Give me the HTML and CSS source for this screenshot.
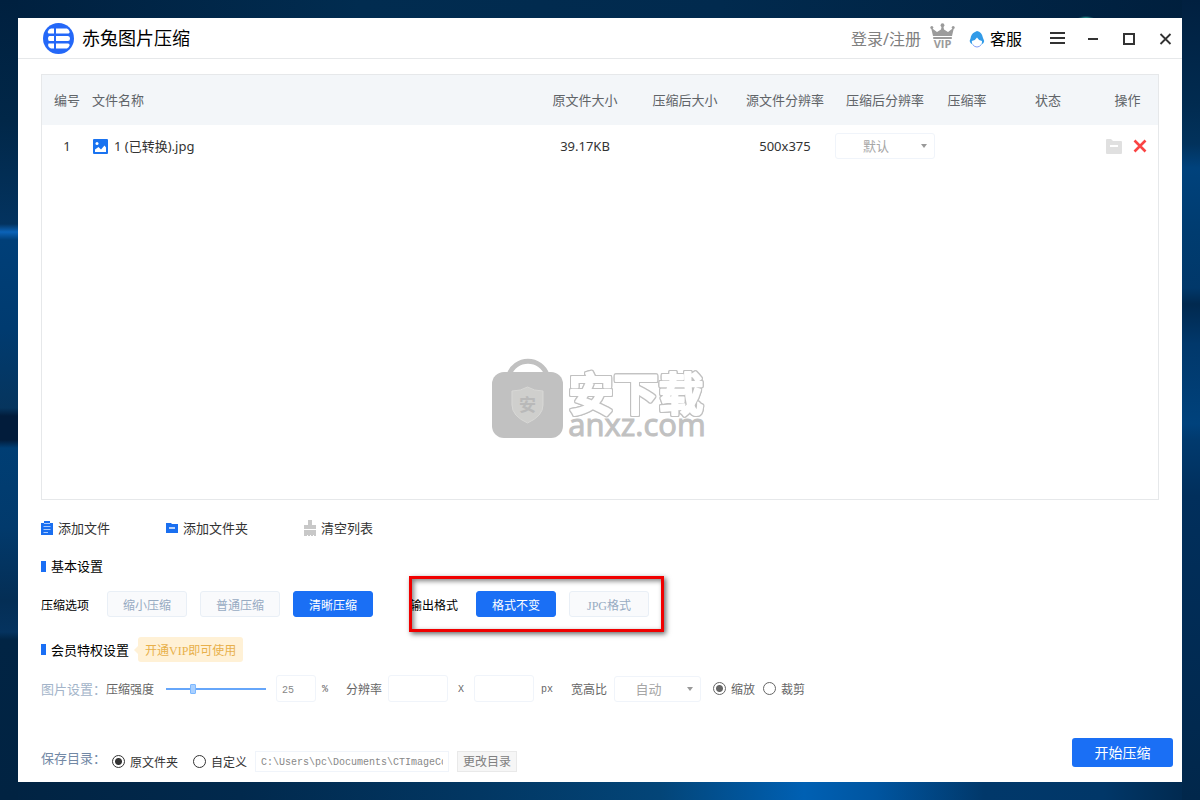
FILE: index.html
```html
<!DOCTYPE html>
<html lang="zh-CN">
<head>
<meta charset="utf-8">
<title>赤兔图片压缩</title>
<link rel="stylesheet" href="styles.css">
</head>
<body class="desktop">
<div class="window">
  <header class="titlebar">
    <svg class="logo" width="31" height="31" viewBox="0 0 31 31" aria-hidden="true">
      <circle cx="15.5" cy="15.5" r="15.5" fill="#2468f8"/>
      <g fill="#fff">
        <path d="M8 5.500h3v5H5.500q-1.500-2 .5-4z"/><path d="M13 5.500h11q2 1 2.500 3t-2 2H13z"/>
        <path d="M6.500 13H11v5H6.500Q5 18 5 15.500T6.500 13z"/><path d="M13 13h12q2 0 2 2.500T25 18H13z"/>
        <path d="M5.500 20.500H11v5H8q-4-2-2.500-5z"/><path d="M13 20.500h12q2 0 1.500 2t-2.500 3H13z"/>
      </g>
    </svg>
    <h1 class="app-name">赤兔图片压缩</h1>
    <a class="login" href="#">登录/注册</a>
    <svg class="vip" width="25" height="30" viewBox="0 0 25 30" role="img" aria-label="VIP">
      <g fill="#9b9b9b">
        <circle cx="12.500" cy="2.200" r="1.900"/><circle cx="1.800" cy="4.500" r="1.500"/><circle cx="23.200" cy="4.500" r="1.500"/>
        <path d="M1 4.500l6 4.500 4-2.500.8-4h1.400l.8 4L18 9l6-4.500-2 8.500H3z"/>
        <path d="M3.200 14h18.600v2H3.200z"/>
        <text class="vip-text" x="12.500" y="25" text-anchor="middle">VIP</text>
      </g>
    </svg>
    <a class="support" href="#">
      <svg width="16" height="17" viewBox="0 0 16 17" aria-hidden="true">
        <path d="M8 0Q13 1 14 7q1.800 2.500.5 5L12 14H4l-2.500-2Q0 9.500 1.500 7.500 2 3 5.500 1.200z" fill="#329be8"/>
        <path d="M2.800 10Q6.500 9.500 8 6.500 9.500 9.500 13 10q.5 5.500-5 6-5.500-.5-5.200-6z" fill="#fff"/>
        <path d="M4 13.800Q5.500 16 8 16t4-2.200" fill="none" stroke="#7f9cf5"/>
      </svg>
      客服
    </a>
    <div class="window-buttons">
      <button class="window-button" aria-label="菜单"><svg width="16" height="16" viewBox="0 0 16 16"><path d="M0 3h15M0 8h15M0 13h15" stroke="#333" stroke-width="2"/></svg></button>
      <button class="window-button" aria-label="最小化"><svg width="16" height="16" viewBox="0 0 16 16"><path d="M2 9h10" stroke="#333" stroke-width="2"/></svg></button>
      <button class="window-button" aria-label="最大化"><svg width="16" height="16" viewBox="0 0 16 16"><path d="M2 4h10v10H2z" fill="none" stroke="#333" stroke-width="2"/></svg></button>
      <button class="window-button" aria-label="关闭"><svg width="16" height="16" viewBox="0 0 16 16"><path d="M2.500 4l10 10M12.500 4l-10 10" stroke="#333" stroke-width="1.800"/></svg></button>
    </div>
  </header>

  <main class="content">
    <section class="file-panel">
      <table class="files">
        <colgroup>
          <col class="col-index"><col><col class="col-data"><col class="col-data"><col class="col-data"><col class="col-data"><col class="col-ratio"><col class="col-state"><col class="col-actions">
        </colgroup>
        <thead>
          <tr><th>编号</th><th class="name">文件名称</th><th>原文件大小</th><th>压缩后大小</th><th>源文件分辨率</th><th>压缩后分辨率</th><th>压缩率</th><th>状态</th><th>操作</th></tr>
        </thead>
        <tbody>
          <tr>
            <td>1</td>
            <td class="name">
              <span class="file-name">
                <svg width="16" height="15" viewBox="0 0 16 15" aria-hidden="true"><rect x="1" width="15" height="15" rx="1" fill="#1a73f0"/><circle cx="5" cy="4.500" r="1.500" fill="#fff"/><path d="M3 13v-2.500L6.500 8 9 10.500 12.500 6.500 14 8.500V13z" fill="#fff"/></svg>
                1 (已转换).jpg
              </span>
            </td>
            <td>39.17KB</td><td></td><td>500x375</td>
            <td><span class="select-box"><select class="select" aria-label="压缩后分辨率"><option>默认</option></select></span></td>
            <td></td><td></td>
            <td>
              <span class="actions">
                <button class="icon-button" aria-label="打开文件夹"><svg width="16" height="15" viewBox="0 0 16 15"><path d="M0 1Q0 0 1 0h4l2 2h8q1 0 1 1v11q0 1-1 1H1q-1 0-1-1z" fill="#e0e0e0"/><path d="M4 7h8" stroke="#fff" stroke-width="2"/></svg></button>
                <button class="icon-button" aria-label="删除"><svg width="14" height="14" viewBox="0 0 14 14"><path d="M1.500 1.500l11 11M12.500 1.500l-11 11" stroke="#fa4444" stroke-width="2.600"/></svg></button>
              </span>
            </td>
          </tr>
        </tbody>
      </table>
      <svg class="watermark" width="216" height="96" viewBox="0 0 216 96" role="img" aria-label="安下载 anxz.com">
        <path d="M17 17a20 20 0 0 1 38 0" fill="none" stroke="#c1c1c1" stroke-width="5"/>
        <rect x="0" y="14" width="71" height="66" rx="12" fill="#c1c1c1"/>
        <path d="M20 33q9 0 15.500-4Q42 33 51 33v14q0 11-15.500 18Q20 58 20 47z" fill="#cfcfcd" stroke="#d8d8d6"/>
        <text class="shield-text" x="35.500" y="53" text-anchor="middle">安</text>
        <text class="mark-title" x="144" y="53" text-anchor="middle">安下载</text>
        <text class="mark-site" x="145" y="78" text-anchor="middle">anxz.com</text>
      </svg>
    </section>

    <div class="toolbar">
      <button class="tool"><svg width="12" height="15" viewBox="0 0 12 15" aria-hidden="true"><path d="M0 2h3V0h6v2h3v12H0z" fill="#1a6ff0"/><path d="M3 2.500h6M2.500 5.500h7M2.500 8.500h7M2.500 11.500h4.500" stroke="#a9cbff"/></svg>添加文件</button>
      <button class="tool"><svg width="12" height="15" viewBox="0 0 12 15" aria-hidden="true"><path d="M0 2h5l1 1h6v9H0z" fill="#1a6ff0"/><path d="M3 7h6" stroke="#fff" stroke-width="1.400"/></svg>添加文件夹</button>
      <button class="tool"><svg width="12" height="16" viewBox="0 0 12 16" aria-hidden="true"><path d="M4 0h4v5h4v4H0V5h4zM0 10h12v6h-2v-1H9v1H7v-1H6v1H4v-1H3v1H0z" fill="#c8c8c8"/></svg>清空列表</button>
    </div>

    <h2 class="section-title">基本设置</h2>
    <div class="options">
      <span class="option-label">压缩选项</span>
      <div class="choices">
        <button class="choice">缩小压缩</button>
        <button class="choice">普通压缩</button>
        <button class="choice active">清晰压缩</button>
      </div>
      <div class="format-group">
        <span class="option-label">输出格式</span>
        <div class="choices">
          <button class="choice active">格式不变</button>
          <button class="choice">JPG格式</button>
        </div>
        <span class="highlight"></span>
      </div>
    </div>

    <div class="member">
      <h2 class="section-title">会员特权设置</h2>
      <span class="vip-tip">开通VIP即可使用</span>
    </div>

    <div class="image-settings">
      <span class="row-title">图片设置：</span>
      <label class="field-label" for="strength">压缩强度</label>
      <input class="slider" id="strength" type="range" min="0" max="100" value="25">
      <input class="text-field percent" type="text" value="25" aria-label="压缩强度百分比">
      <span class="unit">%</span>
      <label class="field-label resolution" for="res-width">分辨率</label>
      <input class="text-field size" id="res-width" type="text">
      <span class="unit times">X</span>
      <input class="text-field size" type="text" aria-label="高度">
      <span class="unit">px</span>
      <label class="field-label aspect" for="aspect">宽高比</label>
      <span class="select-box aspect-select"><select class="select" id="aspect"><option>自动</option></select></span>
      <label class="radio-label"><input class="radio" type="radio" name="fit" checked><span class="radio-text">缩放</span></label>
      <label class="radio-label"><input class="radio" type="radio" name="fit"><span class="radio-text">裁剪</span></label>
    </div>

    <footer class="footer">
      <div class="save">
        <span class="row-title">保存目录：</span>
        <label class="radio-label"><input class="radio" type="radio" name="target" checked><span class="radio-text">原文件夹</span></label>
        <label class="radio-label"><input class="radio" type="radio" name="target"><span class="radio-text">自定义</span></label>
        <input class="path-field" type="text" value="C:\Users\pc\Documents\CTImageCompress" aria-label="保存路径">
        <button class="change-folder">更改目录</button>
      </div>
      <button class="start">开始压缩</button>
    </footer>
  </main>
</div>
</body>
</html>
```
FILE: styles.css
```css
* { box-sizing: border-box; }

button, input, select {
  font: inherit;
  color: inherit;
  margin: 0;
}

button {
  padding: 0;
  border: 0;
  background: none;
}

.desktop {
  display: flex;
  min-height: 100vh;
  margin: 0;
  padding: 18px;
  font: 13px/20px "Noto Sans", "Noto Sans CJK SC", sans-serif;
  color: #333;
  background:
    radial-gradient(ellipse 8px 2px at 1086px 18px, #2d9d96, transparent),
    linear-gradient(#012040, #012b50 13%, #02325c 18%, #00427c 21%, #003c70 29%, #01386a 36%, #01294f 38%, #01386b 43%, #00427c 53%, #013a6e 55%, #012f5c 62%, #01274b) right / 18px 100% no-repeat,
    linear-gradient(#00203f, #012748 15%, #03335f 28%, #0b63b8 29%, #003f78 30%, #003b70 41%, #06355e 51%, #021c3b 52%, #021c3b 55%, #003e74 56%, #023a6c 66%, #042e55 75%, #05335f 79%, #012444 80%, #012342) left / 18px 100% no-repeat,
    linear-gradient(90deg, #012342, #01294d 20%, #023763 40%, #034578 55%, #0060b3 67%, #0055a0 73%, #01386a 82%, #013768 92%, #01274b) bottom / 100% 18px no-repeat,
    linear-gradient(90deg, #00203f, #012c50 30%, #012a4e 60%, #001f3d) #012342;
}

.window {
  display: flex;
  flex: 1;
  flex-direction: column;
  min-width: 0;
  background: #fff;
}

.titlebar {
  display: flex;
  align-items: center;
  height: 41px;
  padding-left: 25px;
  border-bottom: 1px solid #e6e8ea;
  color: #000;
}

.app-name {
  flex: 1;
  margin: 0 0 0 8px;
  font-size: 18px;
  font-weight: 400;
}

.login, .support {
  padding-top: 2px;
  font-size: 16px;
  color: #808080;
  text-decoration: none;
}

.vip { margin: 0 14px 0 9px; }

.vip-text { font: 700 11px "Open Sans", sans-serif; }

.support {
  display: flex;
  align-items: center;
  gap: 5px;
  color: #000;
}

.window-buttons {
  display: flex;
  gap: 4px;
  margin-left: 20px;
}

.window-button {
  display: flex;
  align-items: center;
  justify-content: center;
  width: 32px;
  height: 40px;
}

.content {
  display: flex;
  flex: 1;
  flex-direction: column;
  padding: 15px 23px 8px;
}

.file-panel {
  position: relative;
  flex: 1;
  border: 1px solid #e6e8ea;
}

.files {
  width: 100%;
  table-layout: fixed;
  border-collapse: collapse;
}

.col-index { width: 50px; }
.col-data { width: 100px; }
.col-ratio { width: 64px; }
.col-state { width: 98px; }
.col-actions { width: 61px; }

.files th, .files td {
  padding: 0;
  text-align: center;
  white-space: nowrap;
}

.files th {
  height: 50px;
  font-weight: 400;
  color: #606468;
  background: #f3f6f9;
}

.files td { height: 42px; }

.files .name { text-align: left; }

.file-name {
  display: flex;
  align-items: center;
  gap: 6px;
}

.actions {
  display: flex;
  align-items: center;
  justify-content: center;
  gap: 11px;
  padding-right: 2px;
}

.icon-button { display: flex; }

.select-box {
  position: relative;
  display: block;
}

.select-box::after {
  content: "";
  position: absolute;
  top: 50%;
  right: 8px;
  margin-top: -2px;
  border: 3px solid transparent;
  border-top: 4px solid #999;
  border-bottom: 0;
}

.select {
  display: block;
  width: 100%;
  height: 26px;
  padding: 0 18px 0 0;
  border: 1px solid #f0f4fa;
  border-radius: 3px;
  appearance: none;
  color: #a6a6a6;
  background: #fff;
  text-align: center;
  text-align-last: center;
}

.watermark {
  position: absolute;
  right: 0;
  bottom: 45px;
  left: 0;
  margin: 0 auto;
  overflow: visible;
}

.shield-text {
  font: 700 17px "Noto Sans CJK SC", sans-serif;
  fill: #b9b9b9;
}

.mark-title {
  font: 700 45px "Noto Sans CJK SC", sans-serif;
  fill: #fff;
  stroke: #fff;
  stroke-width: 2px;
  stroke-linejoin: round;
  filter: drop-shadow(1px 0 0 #c1c1c1) drop-shadow(-1px 0 0 #c1c1c1) drop-shadow(0 1px 0 #c1c1c1) drop-shadow(0 -1px 0 #c1c1c1);
}

.mark-site {
  font: 400 31px "Open Sans", sans-serif;
  fill: #c1c1c1;
  stroke: #c1c1c1;
}

.toolbar {
  display: flex;
  gap: 56px;
  margin-top: 16px;
}

.tool {
  display: flex;
  align-items: center;
  gap: 5px;
  height: 24px;
}

.section-title {
  display: flex;
  align-items: center;
  gap: 5px;
  margin: 16px 0 0;
  font-size: 13px;
  font-weight: 400;
  color: #000;
}

.section-title::before {
  content: "";
  width: 5px;
  height: 11px;
  background: #1a6ff5;
}

.options, .format-group {
  display: flex;
  align-items: center;
  gap: 18px;
  font-size: 12px;
}

.options { margin-top: 15px; }

.option-label {
  padding-top: 3px;
  color: #000;
}

.choices {
  display: flex;
  gap: 13px;
}

.choice {
  width: 80px;
  height: 26px;
  padding-top: 3px;
  border: 1px solid #e9eff6;
  border-radius: 3px;
  font-family: "Liberation Serif", "Noto Sans CJK SC", serif;
  color: #97abc2;
  background: #f9fafc;
}

.choice.active {
  border-color: #1a6ff5;
  color: #fff;
  background: #1a6ff5;
}

.format-group {
  position: relative;
  margin-left: 19px;
}

.highlight {
  position: absolute;
  inset: -15px -15px -15px -1px;
  border: 3px solid #f00000;
  box-shadow: 2px 2px 5px rgba(0, 0, 0, 0.6), inset 2px 2px 5px rgba(0, 0, 0, 0.5);
  pointer-events: none;
}

.member {
  display: flex;
  align-items: center;
  gap: 9px;
  margin-top: 20px;
}

.member .section-title { margin: 0; }

.vip-tip {
  position: relative;
  padding: 3px 7px 0;
  border-radius: 3px;
  font: 12px/22px "Liberation Serif", "Noto Sans CJK SC", serif;
  color: #e8b04a;
  background: #fff1d6;
}

.vip-tip::before {
  content: "";
  position: absolute;
  top: 9px;
  left: -4px;
  border: 4px solid transparent;
  border-right-color: #fff1d6;
  border-left: 0;
}

.image-settings {
  display: flex;
  align-items: center;
  margin-top: 13px;
  font-size: 12px;
  color: #666;
}

.row-title {
  width: 65px;
  font-size: 13px;
  color: #a3b4c9;
}

.field-label, .unit, .radio-text { padding-top: 3px; }

.unit { font: 10px/20px "Liberation Mono", monospace; }

.slider {
  width: 100px;
  height: 12px;
  margin: 0 10px 0 12px;
  appearance: none;
  background: linear-gradient(#66a6fa, #66a6fa) center / 100% 2px no-repeat;
}

.slider::-webkit-slider-thumb {
  width: 6px;
  height: 10px;
  appearance: none;
  border: 1px solid #7db8ff;
  border-radius: 1px;
  background: #a9d0ff;
}

.text-field {
  height: 27px;
  padding: 3px 5px 0;
  border: 1px solid #f0f4fa;
  border-radius: 3px;
  font: 10px "Liberation Mono", monospace;
  color: #888;
  background: #fff;
}

.percent {
  width: 40px;
  margin-right: 6px;
}

.size {
  width: 60px;
  margin: 0 7px 0 6px;
}

.resolution { margin-left: 18px; }

.times { padding-left: 3px; margin-right: 4px; }

.aspect { margin: 0 7px 0 18px; }

.aspect-select {
  width: 87px;
  margin-right: 12px;
  font-size: 13px;
}

.radio-label {
  display: flex;
  align-items: center;
  gap: 5px;
  margin-right: 8px;
  font-size: 12px;
}

.radio {
  width: 13px;
  height: 13px;
  border: 1px solid currentColor;
  border-radius: 50%;
  appearance: none;
  background: #fff;
}

.radio:checked {
  background: radial-gradient(circle, currentColor 3px, transparent 4px);
}

.footer {
  display: flex;
  align-items: flex-start;
  justify-content: space-between;
  margin: 36px -14px 0 0;
}

.save {
  display: flex;
  align-items: center;
  padding-top: 10px;
}

.save .row-title {
  width: 71px;
  padding-bottom: 6px;
  color: #7288a5;
}

.save .radio-label { margin-right: 15px; }

.save .radio-label + .path-field { margin-left: -7px; }

.path-field {
  width: 194px;
  height: 21px;
  padding: 2px 5px 0;
  border: 1px solid #f0f4fa;
  font: 10px "Liberation Mono", monospace;
  color: #888;
  background: #fff;
}

.change-folder {
  width: 60px;
  height: 21px;
  margin-left: 8px;
  border: 1px solid #e9e9e9;
  font-size: 12px;
  color: #808080;
  background: #f6f6f6;
}

.start {
  width: 101px;
  height: 29px;
  border-radius: 3px;
  font-size: 14px;
  color: #fff;
  background: #1a6ff5;
}
```
